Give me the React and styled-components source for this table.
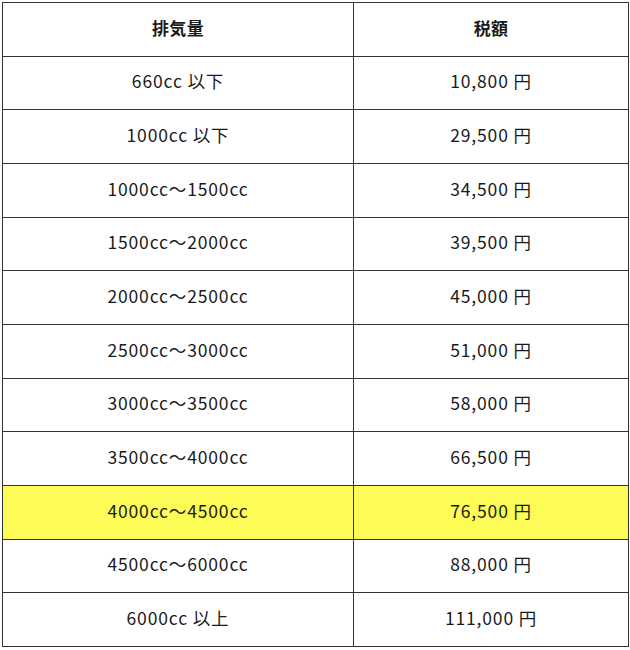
import React from 'react'
import styled, {createGlobalStyle} from 'styled-components'

const GlobalStyle = createGlobalStyle`
  body {
    margin: 0;
    background: #fff;
    font-family: "Noto Sans CJK JP", "Noto Sans", sans-serif;
  }
`

const Wrapper = styled.div`
  padding: 2px;
`

const Table = styled.table`
  width: 626px;
  border-collapse: collapse;
  table-layout: fixed;
  color: #1a1a1a;
`

const Row = styled.tr`
  height: 53.67px;
  background: ${(p) => (p.$highlight ? '#fdfb55' : '#fff')};
`

const Cell = styled.td`
  border: 1px solid #333;
  padding: 0 0 4px;
  text-align: center;
  vertical-align: middle;
  font-size: 17.5px;
  letter-spacing: 0.85px;
`

const HeadCell = styled(Cell).attrs({as: 'th'})`
  font-weight: 700;
  font-size: 17px;
  letter-spacing: 0.3px;
`

// 排気量ごとの税額
const rows = [
  ['660cc 以下', '10,800 円'],
  ['1000cc 以下', '29,500 円'],
  ['1000cc～1500cc', '34,500 円'],
  ['1500cc～2000cc', '39,500 円'],
  ['2000cc～2500cc', '45,000 円'],
  ['2500cc～3000cc', '51,000 円'],
  ['3000cc～3500cc', '58,000 円'],
  ['3500cc～4000cc', '66,500 円'],
  ['4000cc～4500cc', '76,500 円'],
  ['4500cc～6000cc', '88,000 円'],
  ['6000cc 以上', '111,000 円'],
]

const App = () => (
  <Wrapper>
    <GlobalStyle />
    <Table>
      <colgroup>
        <col style={{width: 351}} />
        <col style={{width: 275}} />
      </colgroup>
      <thead>
        <Row>
          <HeadCell>排気量</HeadCell>
          <HeadCell>税額</HeadCell>
        </Row>
      </thead>
      <tbody>
        {rows.map(([size, tax]) => (
          <Row key={size} $highlight={size === '4000cc～4500cc'}>
            <Cell>{size}</Cell>
            <Cell>{tax}</Cell>
          </Row>
        ))}
      </tbody>
    </Table>
  </Wrapper>
)

export default App
